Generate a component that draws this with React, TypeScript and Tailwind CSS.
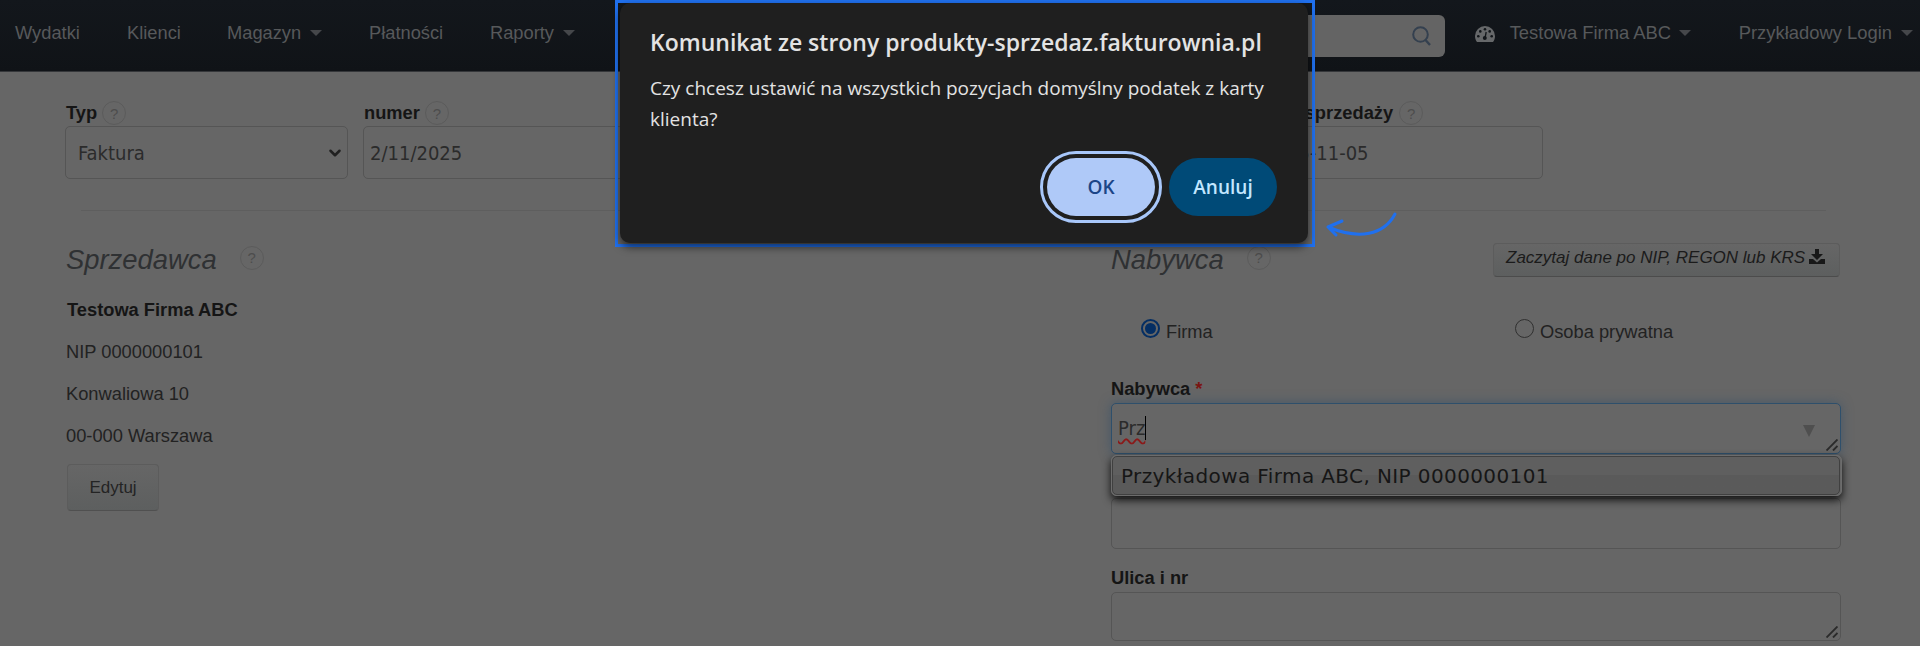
import { ChevronDown } from "lucide-react";

function Caret() {
  return (
    <span className="inline-block h-0 w-0 border-x-[6px] border-t-[6px] border-x-transparent border-t-[#45474a]" />
  );
}

function Gauge() {
  return (
    <svg className="mt-[2px] mr-[15px]" width="20" height="16" viewBox="0 0 20 16">
      <path d="M2 16C.7 14.3 0 12.3 0 10a10 10 0 0 1 20 0c0 2.3-.7 4.3-2 6z" fill="#66686a" />
      <g fill="#12161a">
        <circle cx="3.3" cy="10.2" r="1.3" />
        <circle cx="5.3" cy="5.4" r="1.3" />
        <circle cx="10" cy="3.3" r="1.3" />
        <circle cx="14.7" cy="5.4" r="1.3" />
        <circle cx="16.7" cy="10.2" r="1.3" />
        <circle cx="9.8" cy="12" r="2" />
      </g>
      <path d="m10 12 1.2-6" stroke="#12161a" strokeWidth="1.3" />
    </svg>
  );
}

function Help({ className = "" }: { className?: string }) {
  return (
    <span
      className={`flex size-6 shrink-0 items-center justify-center rounded-full border-[1.5px] border-[#5b5b5b] text-[15px] leading-none font-normal text-[#4d4d4d] not-italic ${className}`}
    >
      ?
    </span>
  );
}

function Grip() {
  return (
    <svg
      className="absolute right-[2px] bottom-[2px]"
      width="12"
      height="12"
      viewBox="0 0 12 12"
      stroke="#2a2a2a"
      strokeWidth="1.9"
    >
      <path d="M0.5 11.5 11.5 0.5M7 11.5l4.5-4.5" />
    </svg>
  );
}

function Label({ children }: { children: React.ReactNode }) {
  return (
    <div className="flex h-6 items-center gap-[5px] text-[18.3px] leading-6 font-bold whitespace-nowrap text-[#151515]">
      {children}
    </div>
  );
}

const inputBox =
  "relative flex items-center rounded-[5px] border-[1.5px] border-[#555555] bg-[#666666] font-['DejaVu_Sans_Condensed','Noto_Sans',sans-serif] text-[20px] text-[#2b2b2b]";

function NavBar() {
  return (
    <nav className="flex h-[72px] items-start border-b border-[#35373a] bg-linear-to-b from-[#13171c] to-[#101317] text-[18.3px] leading-[66px] whitespace-nowrap text-[#57595b]">
      <span className="ml-[15px] w-[112px]">Wydatki</span>
      <span className="w-[100px]">Klienci</span>
      <span className="flex w-[142px] items-center gap-[9px]">
        Magazyn <Caret />
      </span>
      <span className="w-[121px]">Płatności</span>
      <span className="flex items-center gap-[9px]">
        Raporty <Caret />
      </span>
      <div className="ml-auto flex">
        <div className="mt-[15px] mr-[30px] flex h-[42px] w-[240px] items-start justify-end rounded-md bg-[#646464] pt-[11px] pr-[14px]">
          <svg width="19" height="20" viewBox="0 0 19 20" fill="none" stroke="#34404f" strokeWidth="2">
            <circle cx="8.5" cy="8.5" r="7.3" />
            <path d="m13.5 14 4.5 5" strokeWidth="2.4" />
          </svg>
        </div>
        <div className="flex w-[264px] items-center text-[18.4px]">
          <Gauge />
          Testowa Firma ABC
          <span className="ml-[8px] flex">
            <Caret />
          </span>
        </div>
        <div className="mr-[7px] flex items-center gap-[9px] text-[18.4px]">
          Przykładowy Login <Caret />
        </div>
      </div>
    </nav>
  );
}

function TopFields() {
  return (
    <div className="grid grid-cols-[283px_283px_283px_283px_286px] gap-[15px] px-[65px] pt-[29px]">
      <div>
        <Label>
          <span className="ml-px">Typ</span> <Help />
        </Label>
        <div className={`${inputBox} mt-px h-[53px] pl-[12px]`}>
          Faktura
          <ChevronDown className="absolute right-[3px] text-[#202020]" size={18} strokeWidth={3.4} />
        </div>
      </div>
      <div>
        <Label>
          <span className="ml-px">numer</span> <Help />
        </Label>
        <div className={`${inputBox} mt-px h-[53px] pl-[6px]`}>2/11/2025</div>
      </div>
      <div className={`${inputBox} mt-[25px] h-[53px]`} />
      <div className={`${inputBox} mt-[25px] h-[53px]`} />
      <div>
        <Label>
          <span className="ml-[3px]">Data sprzedaży</span> <Help className="ml-px" />
        </Label>
        <div className={`${inputBox} mt-px h-[53px] pl-[6px]`}>2025-11-05</div>
      </div>
    </div>
  );
}

function Seller() {
  return (
    <section className="w-[1045px] text-[18.3px] text-[#222222]">
      <h2 className="flex h-8 items-center gap-[23px] text-[27.4px] text-[#2f3133] italic">
        Sprzedawca <Help className="-mt-[5px]" />
      </h2>
      <div className="mt-[13px] leading-[42px]">
        <p className="pl-px font-bold text-[#151515]">Testowa Firma ABC</p>
        <p>NIP 0000000101</p>
        <p>Konwaliowa 10</p>
        <p>00-000 Warszawa</p>
      </div>
      <button className="mt-[7px] ml-px h-[47px] w-[92px] rounded border border-[#5c5c5c] border-b-[#505050] bg-linear-to-b from-[#666666] to-[#5d5f5f] text-[17px] text-[#242424]">
        Edytuj
      </button>
    </section>
  );
}

function Radio({ label, checked }: { label: string; checked?: boolean }) {
  return (
    <label className="flex items-center gap-[6px] text-[18.3px] leading-6 text-[#222222]">
      {checked ? (
        <span className="-mt-[8px] flex size-[19px] items-center justify-center rounded-full border-2 border-[#042e63]">
          <span className="size-[11px] rounded-full bg-[#042e63]" />
        </span>
      ) : (
        <span className="-mt-[8px] size-[19px] rounded-full border-[1.5px] border-[#303030]" />
      )}
      {label}
    </label>
  );
}

function Buyer() {
  return (
    <section className="w-[730px]">
      <div className="flex justify-between">
        <h2 className="flex h-8 items-center gap-[23px] text-[27.4px] text-[#2f3133] italic">
          Nabywca <Help className="-mt-[5px]" />
        </h2>
        <button className="-mt-[1px] mr-px flex h-[34px] w-[347px] items-start gap-[4px] rounded border border-[#5c5c5c] border-b-[#4c4c4c] bg-linear-to-b from-[#666666] to-[#5d5f5f] pl-[12px] text-[17px] leading-[27px] whitespace-nowrap text-[#1b1b1b] italic">
          Zaczytaj dane po NIP, REGON lub KRS
          <svg className="mt-[5px]" width="16" height="15" viewBox="0 0 16 15" fill="#181818">
            <path d="M6 0h4v5h4L8 11 2 5h4zM0 10h4l4 3.5L12 10h4v5H0z" />
          </svg>
        </button>
      </div>

      <div className="mt-[43px] flex pl-[30px]">
        <div className="w-[374px]">
          <Radio label="Firma" checked />
        </div>
        <Radio label="Osoba prywatna" />
      </div>

      <div className="mt-[33px]">
        <Label>
          Nabywca <span className="text-[#7a1512]">*</span>
        </Label>
        <div
          className={`${inputBox} mt-[2px] h-[51px] border-[#2e4f6b]! pl-[6px] shadow-[0_0_12px_rgba(46,79,107,0.6)]`}
        >
          <span className="-mt-[2px] underline decoration-[#8a1a1a] decoration-wavy decoration-[1.5px] underline-offset-[3px]">
            Prz
          </span>
          <span className="-mt-[2px] h-6 w-px bg-black" />
          <span className="mt-[5px] mr-[25px] ml-auto border-x-[6.5px] border-t-[12px] border-x-transparent border-t-[#4f4f4f]" />
          <Grip />
        </div>
      </div>

      <div className="relative mt-[44px]">
        <div className={`${inputBox} h-[51px]`} />
        <div className="absolute -top-[43px] left-0 w-[731px] rounded-[5px] border border-[#6c6c6c] bg-[#666666] pr-px shadow-[0_4px_9px_rgba(0,0,0,0.85)]">
          <div className="h-[39px] rounded-[5px] border-[1.5px] border-[#404040] bg-linear-to-b from-[#5f5f5f] from-50% to-[#5a5a5a] to-50% pl-[8px] font-['DejaVu_Sans',sans-serif] text-[20px] leading-[38px] tracking-[0.39px] whitespace-nowrap text-[#161616]">
            Przykładowa Firma ABC, NIP 0000000101
          </div>
        </div>
      </div>

      <div className="mt-[17px]">
        <Label>Ulica i nr</Label>
        <div className={`${inputBox} mt-[2px] h-[49px]`}>
          <Grip />
        </div>
      </div>
    </section>
  );
}

function ConfirmDialog() {
  return (
    <div className="absolute top-0 left-[615px] h-[247px] w-[700px] border-[3px] border-[#2070ee] pr-[4px] pl-[2px]">
      <div className="h-[240px] rounded-[10px] bg-[#1f1f1f] px-[30px] pt-[21px] font-['Open_Sans','Noto_Sans',sans-serif] text-[#e3e3e3] shadow-[0_4px_9px_rgba(0,0,0,0.6)]">
        <h1 className="text-[23px] leading-9 font-semibold whitespace-nowrap">
          Komunikat ze strony produkty-sprzedaz.fakturownia.pl
        </h1>
        <p className="mt-[13px] text-[19px] leading-[31px] whitespace-nowrap">
          Czy chcesz ustawić na wszystkich pozycjach domyślny podatek z karty
          <br />
          klienta?
        </p>
        <div className="mt-[23px] mr-px flex justify-end gap-[14px] text-[19px] font-semibold">
          <button className="h-[58px] w-[108px] rounded-full bg-[#afc9f8] pt-px text-[#1b4587] outline-3 outline-offset-4 outline-[#a8c7fa]">
            OK
          </button>
          <button className="h-[58px] w-[108px] rounded-full bg-[#004a77] pt-px text-[#c2e7ff]">
            Anuluj
          </button>
        </div>
      </div>
    </div>
  );
}

export default function App() {
  return (
    <div className="relative h-[646px] w-[1920px] overflow-hidden bg-[#666666] font-['Liberation_Sans',Arial,sans-serif]">
      <NavBar />
      <TopFields />
      <div className="mt-[31px] ml-[81px] h-px w-[1745px] bg-[#5e5e5e]" />
      <div className="mt-[33px] flex pl-[66px]">
        <Seller />
        <Buyer />
      </div>
      <ConfirmDialog />
      <svg
        className="absolute top-[208px] left-[1324px]"
        width="76"
        height="32"
        viewBox="0 0 76 32"
        fill="none"
        stroke="#2070ee"
        strokeWidth="3"
        strokeLinecap="round"
        strokeLinejoin="round"
      >
        <path d="M71 6C60 27 35 32 4 19M18 13 4 19 12 27" />
      </svg>
    </div>
  );
}
